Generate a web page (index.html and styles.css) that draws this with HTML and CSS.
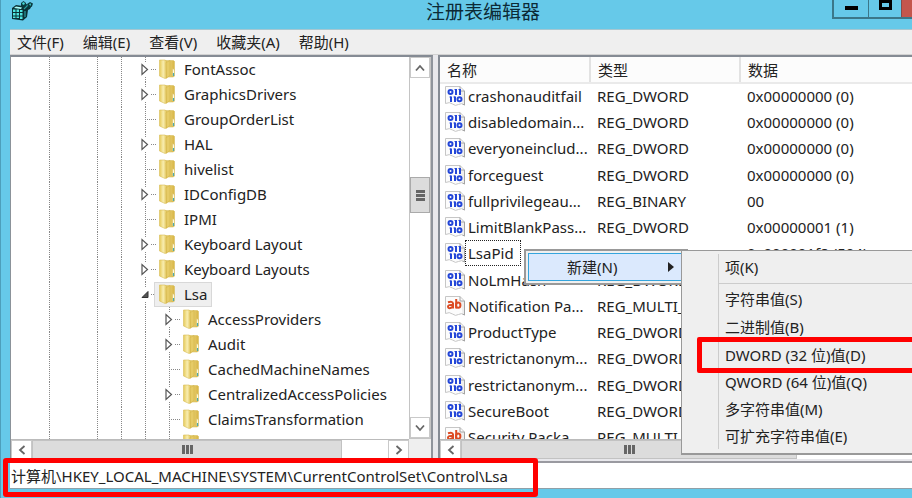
FILE: index.html
```html
<!DOCTYPE html>
<html lang="zh-CN">
<head>
<meta charset="utf-8">
<title>注册表编辑器</title>
<link rel="stylesheet" href="styles.css">
</head>
<body>
<svg width="0" height="0" class="defs" aria-hidden="true">
  <defs>
    <linearGradient id="gold" x1="0" x2="1"><stop offset="0" stop-color="#e6ca58"/><stop offset=".5" stop-color="#f8edb0"/><stop offset="1" stop-color="#dfc050"/></linearGradient>
    <linearGradient id="back" x1="0" x2="1"><stop offset="0" stop-color="#f5e69a"/><stop offset="1" stop-color="#d8b544"/></linearGradient>
    <symbol id="folder" viewBox="0 0 17 20">
      <path d="M5 1.500h9.500l1 1v14.500l-1.500 1H6z" fill="url(#back)" stroke="#d9bf62" stroke-width=".6"/>
      <path d="M.5 1h5.500l2 1.500v16.500L6 19.500.5 17z" fill="url(#gold)" stroke="#d8bd59" stroke-width=".6"/>
      <path d="M7 3.500 11 1.500v15L7.500 19z" fill="#e6cb66" stroke="#cfae43" stroke-width=".5"/>
      <path d="M13.500 9.500q2 0 2 2.500v5h-2z" fill="#fffbe2" stroke="#d6b955" stroke-width=".5"/>
      <path d="M14.500 14v3" stroke="#49a9b0" stroke-width="1.200"/>
    </symbol>
    <symbol id="page" viewBox="0 0 20 20">
      <path d="M.5.5H15L19.500 5v14q-3-2.500-6-.5-3 2-6-.5-3-2.500-7-.5z" fill="#fcfcfc" stroke="#c6c6c6"/>
      <path d="M15 .5V5h4.500v14l-2-1" fill="#eee" stroke="#a4a4a4"/>
    </symbol>
    <symbol id="binary" viewBox="0 0 20 20">
      <use href="#page"/>
      <g fill="none" stroke="#2447d8" stroke-width="2"><ellipse cx="5.500" cy="6" rx="2" ry="2"/><path d="M11 3v6M15 3v6M6 10.500v5.500M10 10.500v5.500"/><ellipse cx="14.500" cy="13.200" rx="2" ry="2"/><path d="M9.500 3.500H11M4.500 11H6M8.500 11H10M13.500 3.500H15" stroke-width="1"/></g>
    </symbol>
    <symbol id="string" viewBox="0 0 20 20">
      <use href="#page"/>
      <g fill="none" stroke="#dc4c24" stroke-width="2"><path d="M3 6.300q4.500-1.500 5 1.200v5M8 9q-5-.5-5 1.600 0 2 2.300 1.500Q8 11.500 8 9M11.200 3v9.500"/><ellipse cx="13.200" cy="9.200" rx="2.200" ry="2.600"/></g>
    </symbol>
    <symbol id="closed" viewBox="0 0 8 12"><path d="M1 1v10l5.500-5z" fill="#fff" stroke="#555" stroke-width="1.200"/></symbol>
    <symbol id="open" viewBox="0 0 8 12"><path d="M7 3v6H1z" fill="#555" stroke="#333"/></symbol>
    <symbol id="chevron" viewBox="0 0 10 10"><path d="M1 7.500 5 3l4 4.500" fill="none" stroke="#666" stroke-width="1.800"/></symbol>
  </defs>
</svg>
<div class="window">
  <header class="titlebar">
    <svg class="app-icon" viewBox="0 0 22 20" aria-hidden="true">
      <path d="M1 7 5 4l7 1 2-3 4 3 3-1-2 4-2 1-1 7-4 3.500L1 18z" fill="#0a3135"/>
      <path d="M2 8.500h2.500V11H2zM5.500 8.500H8V11H5.500zM9 9h2.500v2H9zM2 12h2.500v2.500H2zM5.500 12H8v2.500H5.500zM9 12h2.500v2.500H9zM2 15.500h2.500V17H2zM5.500 15.500H8V17H5.500zM9 15.500h2.500V18H9z" fill="#4fe6e0"/>
      <path d="m3 7 2-1.500 6 1L10 8z" fill="#a9fffa"/>
      <path d="M14 10v6M13 8l4-4" stroke="#2a9c9f" stroke-width="1.200"/>
      <path d="m10 2 2.500-2L15 2v3l-2.500 2L10 5zM16 3l3-2 3 1.500-1 3-3 1.500z" fill="#0a3a3f"/>
      <path d="m11 2 2-1 1 2-2 1zM18 3l2-.5L19.500 5z" fill="#45d9d6"/>
    </svg>
    <h1>注册表编辑器</h1>
    <div class="window-buttons">
      <button class="min" aria-label="最小化"><i></i></button>
      <button class="max" aria-label="最大化"><i></i></button>
      <button class="close" aria-label="关闭"></button>
    </div>
  </header>
  <nav class="menubar">
    <button>文件(F)</button><button>编辑(E)</button><button>查看(V)</button><button>收藏夹(A)</button><button>帮助(H)</button>
  </nav>
  <main class="panes">
    <section class="pane tree-pane">
      <div class="tree" id="tree" role="tree"></div>
      <div class="vscroll">
        <button aria-label="向上滚动"><svg><use href="#chevron"/></svg></button>
        <div class="vtrack"><div class="vthumb"><i></i></div></div>
        <button aria-label="向下滚动"><svg class="down"><use href="#chevron"/></svg></button>
      </div>
      <div class="hscroll">
        <button aria-label="向左滚动"><svg class="left"><use href="#chevron"/></svg></button>
        <div class="hthumb"><i></i></div><div class="htrack"></div>
        <button aria-label="向右滚动"><svg class="right"><use href="#chevron"/></svg></button>
      </div>
      <div class="corner"></div>
    </section>
    <section class="pane list-pane">
      <div class="list">
        <table>
          <colgroup><col class="name-col"><col class="type-col"><col></colgroup>
          <thead><tr><th>名称</th><th>类型</th><th>数据</th></tr></thead>
          <tbody id="values"></tbody>
        </table>
      </div>
      <div class="hscroll">
        <button aria-label="向左滚动"><svg class="left"><use href="#chevron"/></svg></button>
        <div class="hthumb"><i></i></div><div class="htrack"></div>
      </div>
      <div class="context-menu"><button>新建(N)<i></i></button></div>
      <div class="submenu">
        <button>项(K)</button>
        <hr>
        <button>字符串值(S)</button>
        <button>二进制值(B)</button>
        <button class="marked">DWORD (32 位)值(D)</button>
        <button>QWORD (64 位)值(Q)</button>
        <button>多字符串值(M)</button>
        <button>可扩充字符串值(E)</button>
      </div>
    </section>
  </main>
  <footer class="address">
    <input aria-label="路径" value="计算机\HKEY_LOCAL_MACHINE\SYSTEM\CurrentControlSet\Control\Lsa" readonly>
    <div class="address-mark"></div>
  </footer>
</div>
<script src="app.js"></script>
</body>
</html>
```
FILE: styles.css
```css
*, *::before { box-sizing: border-box; }
body {
  margin: 0;
  font: 15px/20px "Noto Sans", "Noto Sans CJK SC", sans-serif;
  color: #222;
}
button {
  margin: 0;
  padding: 0;
  border: 0;
  background: none;
  color: inherit;
  font: inherit;
}
.defs { position: absolute; }
.window {
  height: 100vh;
  display: flex;
  flex-direction: column;
  padding: 0 0 9px 9px;
  background: #66c9e9;
  border-left: 1px solid #4d9fbb;
  overflow: hidden;
}
.titlebar {
  flex: 0 0 29px;
  display: grid;
  grid-template-columns: 1fr auto 1fr;
  align-items: start;
  padding-left: 44px;
}
.app-icon { width: 22px; height: 20px; margin: 1px 0 0 -43px; }
h1 {
  margin: 0;
  font: 19px/22px "Noto Sans CJK SC", sans-serif;
  color: #0c2a36;
}
.window-buttons { justify-self: end; display: flex; height: 19px; border: 1px solid #3b7789; border-width: 0 0 2px 2px; }
.window-buttons button { display: flex; justify-content: center; }
.min { width: 34px; }
.window-buttons .max { width: 33px; border-left: 1px solid #3b7789; }
.close { width: 11px; }
.window-buttons .close { background: #c4564c; border-left: 1px solid #884b49; }
.min i { width: 13px; height: 4px; margin-top: 6px; background: #000; }
.max i { width: 13px; height: 10px; border: 3px solid #000; }

.menubar {
  flex: 0 0 26px;
  display: flex;
  gap: 19px;
  padding-left: 7px;
  background: #efefef;
  border-top: 1px solid #a6c7d1;
  border-bottom: 1px solid #d2d2d2;
}
.panes { flex: 1; min-height: 0; display: flex; gap: 5px; background: #e8e8ec; }
.pane { display: grid; grid-template-rows: 1fr 20px; background: #fff; border-top: 2px solid #858b94; min-width: 0; }
.tree-pane { flex: 0 0 423px; grid-template-columns: 1fr 22px; border-right: 2px solid #8f949c; border-left: 1px solid #8b9299; }
.list-pane { flex: 1; position: relative; border-left: 2px solid #858b94; }

.tree { overflow: hidden; min-height: 0; padding-left: 26px; }
.node { display: flex; height: 25px; align-items: center; }
.guide { flex: 0 0 24px; height: 25px; display: grid; place-items: center; }
.line { background: repeating-linear-gradient(#888 0 1px, #fff 1px 2px) center / 1px 100% no-repeat; }
.tick {
  background:
    repeating-linear-gradient(90deg, #888 0 1px, #fff 1px 2px) right center / 12px 1px no-repeat,
    repeating-linear-gradient(#888 0 1px, #fff 1px 2px) center / 1px 100% no-repeat;
}
.guide svg { width: 10px; height: 15px; padding: 1px; background: #fff; }
.label { display: flex; align-items: center; gap: 8px; height: 25px; line-height: 18px; padding: 0 4px 2px 1px; border: 1px solid transparent; }
.label svg { width: 17px; height: 20px; }
.selected .label { margin-left: -3px; padding-left: 4px; background: #efefef; border-color: #d8d8d8; }

.vscroll { display: flex; flex-direction: column; border: 1px solid #c4c4c4; border-top: 0; }
.vscroll button, .hscroll button { display: grid; place-items: center; flex: 0 0 21px; background: #fff; border: 1px solid #c9c9c9; }
.vscroll svg, .hscroll svg { width: 10px; height: 10px; }
.down { transform: rotate(180deg); }
.left { transform: rotate(-90deg); }
.right { transform: rotate(90deg); }
.vtrack { flex: 1; padding-top: 99px; }
.vthumb { height: 36px; display: grid; place-items: center; background: #dcdcdc; border: 1px solid #aaa; }
.vthumb i { width: 9px; height: 11px; background: repeating-linear-gradient(#666 0 3px, transparent 3px 4px); }
.hscroll { display: flex; background: #fff; border-top: 1px solid #bbb; }
.hthumb { display: grid; place-items: center; background: #dcdcdc; border: 1px solid #c2c2c2; }
.hthumb i { width: 11px; height: 9px; background: repeating-linear-gradient(90deg, #666 0 3px, transparent 3px 4px); }
.tree-pane .hthumb { flex: 0 0 310px; }
.htrack { flex: 1; }
.list-pane .hthumb { flex: 0 0 336px; }
.corner { background: #efefef; }

.list { overflow: hidden; min-height: 0; }
table { width: 100%; table-layout: fixed; border-collapse: collapse; }
.name-col, .type-col { width: 150px; }
th { height: 26px; padding: 0 0 0 7px; text-align: left; font-weight: 400; background: #fcfcfc; border-right: 2px solid #e2e2e2; border-bottom: 2px solid #eaeaea; }
th:last-child { border-right: 0; }
td { height: 26px; padding: 0 0 2px 7px; white-space: nowrap; }
td:first-child { padding-left: 5px; }
tr:nth-child(4n) td { height: 27px; }
.value { display: flex; align-items: center; height: 24px; }
.value svg { flex: none; width: 20px; height: 20px; }
.value span { padding: 0 2px; border: 1px dotted transparent; line-height: 24px; }
.value .focused { padding-right: 6px; border-color: #222; }

.context-menu {
  position: absolute;
  left: 84px;
  top: 192px;
  width: 164px;
  padding: 2px;
  background: #f0f0f0;
  border: 2px solid #999;
}
.context-menu button { display: flex; align-items: center; justify-content: space-between; width: 100%; height: 28px; padding: 0 9px 0 38px; background: #dbe9fd; border: 1px solid #35a5dd; }
.context-menu i { border: 5px solid transparent; border-left: 6px solid #222; border-right: 0; }
.submenu {
  position: absolute;
  left: 241px;
  right: 0;
  top: 193px;
  display: flex;
  flex-direction: column;
  padding: 2px 0 4px 36px;
  background: linear-gradient(#ccc, #ccc) 36px 3px / 1px 195px no-repeat #efefef;
  border: 1px solid #999;
  border-width: 1px 0 2px 1px;
}
.submenu button { height: 28px; padding-left: 7px; text-align: left; position: relative; white-space: nowrap; }
.submenu button:nth-of-type(n + 4) { height: 27px; }
.submenu hr { width: 100%; height: 1px; margin: 2px 0 1px; border: 0; background: #ccc; }
.submenu .marked::before { content: ""; position: absolute; left: -21px; right: -5px; top: -4px; height: 36px; border: 5px solid #f00; border-radius: 2px; }

.address { flex: 0 0 30px; position: relative; padding-top: 4px; background: #e8e8ec; border-bottom: 1px solid #8fa0a8; }
.address::before { content: ""; position: absolute; left: 0; right: 0; top: 2px; height: 2px; background: #9a9aa0; }
.address input { display: block; width: 100%; height: 25px; padding: 0 0 0 1px; border: 0; outline: 0; background: #fff; color: #222; font: inherit; }
.address-mark { position: absolute; left: -7px; top: -1px; width: 535px; height: 39px; border: 5px solid #f00; border-radius: 3px; }
```
FILE: app.js
```js
// Registry keys: depth below the top visible level, expander state, name.
const keys = [
  [0, 'closed', 'FontAssoc'], [0, 'closed', 'GraphicsDrivers'], [0, '', 'GroupOrderList'],
  [0, 'closed', 'HAL'], [0, '', 'hivelist'], [0, 'closed', 'IDConfigDB'], [0, '', 'IPMI'],
  [0, 'closed', 'Keyboard Layout'], [0, 'closed', 'Keyboard Layouts'], [0, 'open', 'Lsa'],
  [1, 'closed', 'AccessProviders'], [1, 'closed', 'Audit'], [1, '', 'CachedMachineNames'],
  [1, 'closed', 'CentralizedAccessPolicies'], [1, '', 'ClaimsTransformation'], [1, '', 'Credssp']
];
const line = '<span class="guide line"></span>';
document.getElementById('tree').innerHTML = keys.map(([depth, state, name]) =>
  `<div class="node${state === 'open' ? ' selected' : ''}" role="treeitem">${line}<span class="guide"></span>${line}${line}${depth ? line : ''}` +
  `<span class="guide tick">${state ? `<svg><use href="#${state}"/></svg>` : ''}</span>` +
  `<span class="label"><svg><use href="#folder"/></svg>${name}</span></div>`).join('');

const zero = '0x00000000 (0)';
const values = [
  ['binary', 'crashonauditfail', 'REG_DWORD', zero],
  ['binary', 'disabledomain...', 'REG_DWORD', zero],
  ['binary', 'everyoneinclud...', 'REG_DWORD', zero],
  ['binary', 'forceguest', 'REG_DWORD', zero],
  ['binary', 'fullprivilegeau...', 'REG_BINARY', '00'],
  ['binary', 'LimitBlankPass...', 'REG_DWORD', '0x00000001 (1)'],
  ['binary', 'LsaPid', 'REG_DWORD', '0x000001f8 (504)'],
  ['binary', 'NoLmHash', 'REG_DWORD', ''],
  ['string', 'Notification Pa...', 'REG_MULTI_SZ', ''],
  ['binary', 'ProductType', 'REG_DWORD', ''],
  ['binary', 'restrictanonym...', 'REG_DWORD', ''],
  ['binary', 'restrictanonym...', 'REG_DWORD', ''],
  ['binary', 'SecureBoot', 'REG_DWORD', ''],
  ['string', 'Security Packa...', 'REG_MULTI_SZ', '']
];
document.getElementById('values').innerHTML = values.map(([icon, name, type, data]) =>
  `<tr><td><div class="value"><svg><use href="#${icon}"/></svg><span${name === 'LsaPid' ? ' class="focused"' : ''}>${name}</span></div></td>` +
  `<td>${type}</td><td>${data}</td></tr>`).join('');
```
